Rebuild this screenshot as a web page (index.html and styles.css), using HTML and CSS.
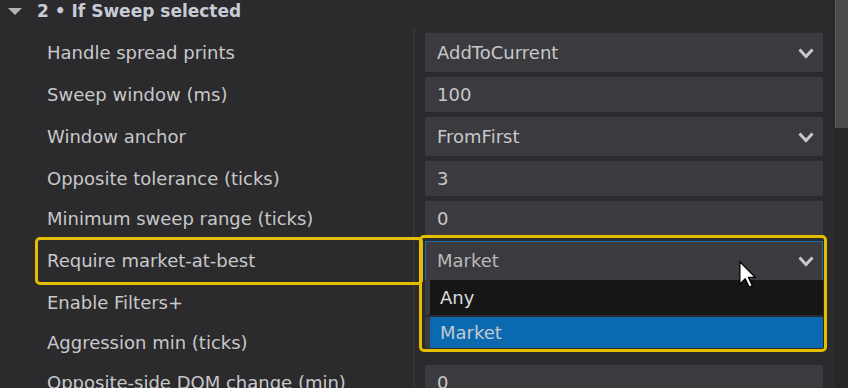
FILE: index.html
```html
<!DOCTYPE html>
<html>
<head>
<meta charset="utf-8">
<link rel="stylesheet" href="styles.css">
</head>
<body>
<div class="app">
  <div class="panel">
    <div class="group-head">
      <span class="caret"></span>
      <span class="title">2 • If Sweep selected</span>
    </div>
    <div class="props">
      <div class="row tall">
        <div class="label">Handle spread prints</div>
        <div class="cell"><div class="field">AddToCurrent<svg class="chev" viewBox="0 0 16 11" width="16" height="11"><polyline points="1.5,1.5 8,8.5 14.5,1.5"/></svg></div></div>
      </div>
      <div class="row">
        <div class="label">Sweep window (ms)</div>
        <div class="cell"><div class="field">100</div></div>
      </div>
      <div class="row tall">
        <div class="label">Window anchor</div>
        <div class="cell"><div class="field">FromFirst<svg class="chev" viewBox="0 0 16 11" width="16" height="11"><polyline points="1.5,1.5 8,8.5 14.5,1.5"/></svg></div></div>
      </div>
      <div class="row">
        <div class="label">Opposite tolerance (ticks)</div>
        <div class="cell"><div class="field">3</div></div>
      </div>
      <div class="row">
        <div class="label">Minimum sweep range (ticks)</div>
        <div class="cell"><div class="field">0</div></div>
      </div>
      <div class="row tall">
        <div class="label">Require market-at-best</div>
        <div class="cell">
          <div class="field focused"><span class="dim">Market</span><svg class="chev" viewBox="0 0 16 11" width="16" height="11"><polyline points="1.5,1.5 8,8.5 14.5,1.5"/></svg>
            <div class="popup">
              <div class="option">Any</div>
              <div class="option sel">Market</div>
            </div>
          </div>
        </div>
      </div>
      <div class="row">
        <div class="label">Enable Filters+</div>
        <div class="cell"></div>
      </div>
      <div class="row">
        <div class="label">Aggression min (ticks)</div>
        <div class="cell"></div>
      </div>
      <div class="row">
        <div class="label">Opposite-side DOM change (min)</div>
        <div class="cell"><div class="field">0</div></div>
      </div>
    </div>
  </div>
  <div class="scrollbar"><div class="thumb"></div></div>

  <div class="hl hl-label"></div>
  <div class="hl hl-value"></div>
  <svg class="cursor" viewBox="0 0 12 19" width="17" height="27"><path d="M0.6,0.6 L0.6,16.2 L4.4,12.6 L7.2,18.4 L9.4,17.4 L6.7,11.6 L11.6,11.6 Z"/></svg>
</div>
</body>
</html>
```
FILE: styles.css
```css
* { box-sizing: border-box; }
html, body {
  margin: 0;
  padding: 0;
}
body {
  background: #2b2b2e;
  width: 848px;
  height: 388px;
  overflow: hidden;
  font-family: "DejaVu Sans", sans-serif;
}
.app {
  position: relative;
  display: flex;
  height: 388px;
}
.panel {
  width: 835px;
  flex: none;
}
.scrollbar {
  width: 13px;
  flex: none;
  background: #262628;
}
.thumb {
  height: 128px;
  background: #4b4b4d;
  border-left: 1px solid #5a5a5c;
}
.group-head {
  height: 28px;
  display: flex;
  align-items: flex-start;
}
.caret {
  margin: 8px 0 0 8px;
  width: 0;
  height: 0;
  border-left: 7px solid transparent;
  border-right: 7px solid transparent;
  border-top: 7px solid #b3b3b3;
}
.title {
  margin: 1px 0 0 15px;
  font-weight: bold;
  font-size: 17px;
  line-height: 20px;
  color: #c7cbd6;
  white-space: nowrap;
}
.props {
  padding-top: 5px;
  display: flex;
  flex-direction: column;
  gap: 5px;
  background: linear-gradient(#343437, #343437) 413px 0 / 2px 100% no-repeat;
}
.row {
  display: grid;
  grid-template-columns: 413px 1fr;
  height: 35px;
}
.row.tall {
  height: 39px;
}
.label {
  padding-left: 47px;
  display: flex;
  align-items: center;
  font-size: 18px;
  color: #c8c8c8;
  white-space: nowrap;
}
.cell {
  padding: 0 12px;
}
.field {
  position: relative;
  height: 100%;
  background: #3a3a3f;
  display: flex;
  align-items: center;
  padding-left: 12px;
  font-size: 18px;
  color: #c8c8c8;
}
.chev {
  position: absolute;
  right: 9px;
  top: calc(50% - 5px);
}
.chev polyline {
  fill: none;
  stroke: #c8c8c8;
  stroke-width: 3;
}
.focused {
  box-shadow: inset 0 1px 0 #1d6db5, inset 1px 0 0 #1d6db5, inset -1px 0 0 #1d6db5;
}
.dim {
  color: #b9b9b9;
}
.popup {
  position: absolute;
  z-index: 5;
  top: 100%;
  left: 0;
  right: 0;
  background: #2a2a2c;
  display: flex;
  flex-direction: column;
}
.option {
  height: 35px;
  border-left: 5px solid #3a3a3f;
  padding-left: 10px;
  display: flex;
  align-items: center;
  background: #161616;
  color: #dcdcdc;
}
.option.sel {
  margin-top: 2px;
  height: 31px;
  background: #0b69b0;
  color: #c3c9d0;
}
.hl {
  position: absolute;
  z-index: 10;
  border: 3px solid #e6be00;
  border-radius: 5px;
}
.hl-label {
  left: 35px;
  top: 237px;
  width: 388px;
  height: 48px;
}
.hl-value {
  left: 419px;
  top: 235px;
  width: 408px;
  height: 117px;
}
.cursor {
  position: absolute;
  z-index: 11;
  left: 739px;
  top: 261px;
}
.cursor path {
  fill: #ffffff;
  stroke: #000000;
  stroke-width: 0.9;
  stroke-linejoin: miter;
}
```
